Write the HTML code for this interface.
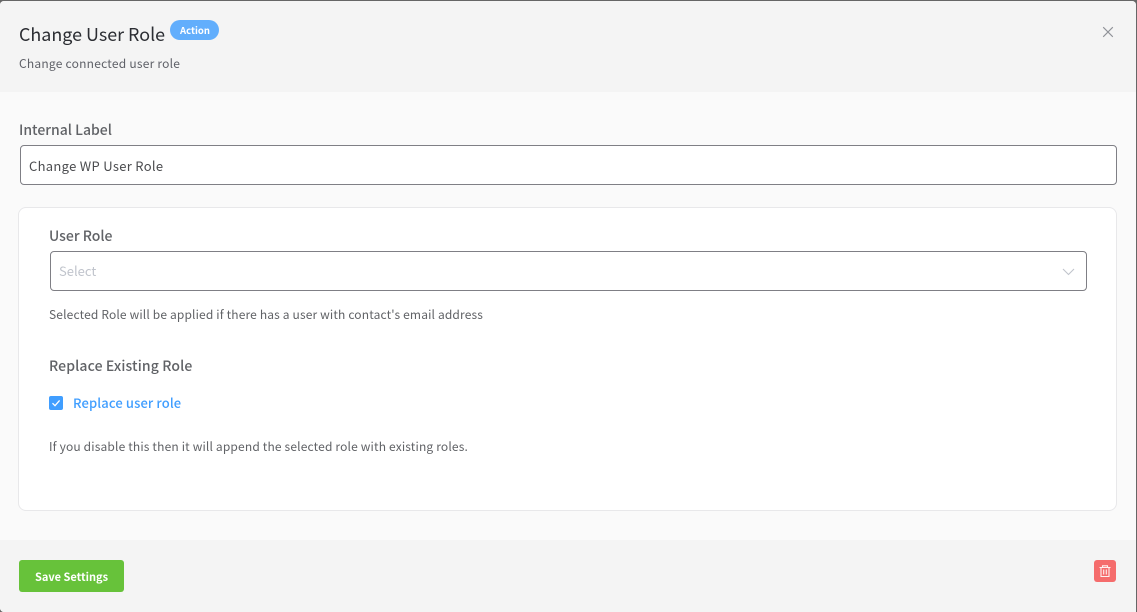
<!DOCTYPE html>
<html><head><meta charset="utf-8">
<style>
html,body{margin:0;padding:0;width:1137px;height:612px;overflow:hidden;background:#666}
body{font-family:"Noto Sans CJK SC","Liberation Sans",sans-serif;position:relative}
.frame{position:absolute;left:0;top:1px;width:1136px;height:611px;background:#fafafa;border-radius:4px 4px 0 4px;overflow:hidden}
.head{position:absolute;left:0;top:0;width:1136px;height:91px;background:#f4f4f4}
.foot{position:absolute;left:0;top:539px;width:1136px;height:72px;background:#f4f4f4}
.t{position:absolute;white-space:nowrap;line-height:20px}
.input{position:absolute;box-sizing:border-box;background:#fff;border:1px solid #7f7f85;border-radius:4px}
.card{position:absolute;left:18px;top:207px;width:1099px;height:304px;box-sizing:border-box;background:#fff;border:1px solid #e8e8ea;border-radius:8px}
</style></head>
<body>
<div class="frame">
<div class="head"></div>
<div class="foot"></div>
</div>

<div class="t" style="left:19px;top:24px;font-size:17.9px;color:#2c2e33">Change User Role</div>
<div style="position:absolute;left:170px;top:20px;width:49px;height:20px;border-radius:10px;background:#62aefc"></div>
<div class="t" style="left:180px;top:20px;font-size:9.5px;font-weight:700;color:#fff">Action</div>
<div class="t" style="left:19px;top:54px;font-size:12px;letter-spacing:.23px;color:#5f6168">Change connected user role</div>
<svg style="position:absolute;left:1102px;top:26px" width="12" height="12" viewBox="0 0 12 12"><path d="M1.2 1.2L10.8 10.8M10.8 1.2L1.2 10.8" stroke="#8f9197" stroke-width="1.1" fill="none"/></svg>

<div class="t" style="left:19px;top:120px;font-size:14px;font-weight:500;color:#606266">Internal Label</div>
<div class="input" style="left:20px;top:145px;width:1097px;height:40px"></div>
<div class="t" style="left:29px;top:156px;font-size:13px;letter-spacing:.3px;color:#4b4c4f">Change WP User Role</div>

<div class="card"></div>
<div class="t" style="left:49px;top:226px;font-size:14px;font-weight:500;color:#606266">User Role</div>
<div class="input" style="left:50px;top:251px;width:1037px;height:40px"></div>
<div class="t" style="left:59px;top:261px;font-size:13px;color:#c0c4cc">Select</div>
<svg style="position:absolute;left:1062px;top:268px" width="13" height="8" viewBox="0 0 13 8"><path d="M1 1L6.5 6.5L12 1" stroke="#c0c4cc" stroke-width="1.1" fill="none"/></svg>
<div class="t" style="left:49px;top:305px;font-size:12px;letter-spacing:.15px;color:#606266">Selected Role will be applied if there has a user with contact's email address</div>

<div class="t" style="left:49px;top:356px;font-size:14px;font-weight:500;letter-spacing:.12px;color:#606266">Replace Existing Role</div>
<div style="position:absolute;left:49px;top:396px;width:14px;height:14px;border-radius:2px;background:#409eff"></div>
<svg style="position:absolute;left:49px;top:396px" width="14" height="14" viewBox="0 0 14 14"><path d="M3.5 7.2L6 9.7L10.6 4.4" stroke="#fff" stroke-width="1.3" fill="none"/></svg>
<div class="t" style="left:73px;top:393px;font-size:13px;font-weight:500;letter-spacing:.12px;color:#409eff">Replace user role</div>
<div class="t" style="left:49px;top:437px;font-size:12px;letter-spacing:.16px;color:#606266">If you disable this then it will append the selected role with existing roles.</div>

<div style="position:absolute;left:19px;top:560px;width:105px;height:32px;border-radius:3px;background:#67c23a"></div>
<div class="t" style="left:35px;top:567px;font-size:11px;font-weight:700;color:#fff">Save Settings</div>

<div style="position:absolute;left:1094px;top:560px;width:22px;height:22px;border-radius:3px;background:#f56c6c"></div>
<svg style="position:absolute;left:1094px;top:560px" width="22" height="22" viewBox="0 0 22 22"><path d="M5.500 7.500H16.500M8.500 7.500V5.800H13.500V7.500M7 7.500V16.500H15V7.500M9.700 9.500V14.500M12.300 9.500V14.500" stroke="#fff" stroke-width="1.100" fill="none" opacity=".9"/></svg>
</body></html>
